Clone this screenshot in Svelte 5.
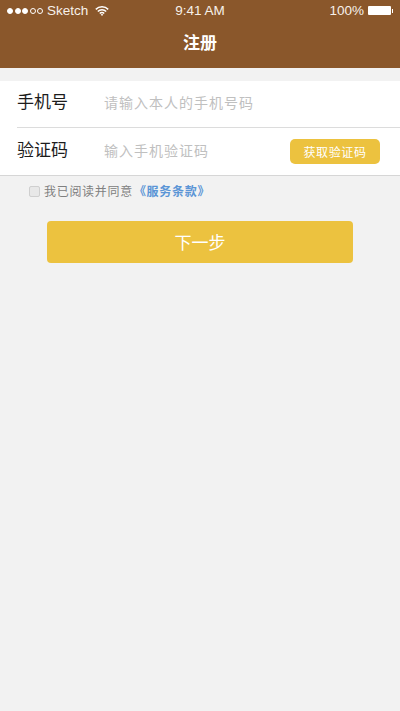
<script>
  let phone = '';
  let code = '';
  let agreed = false;
</script>

<div class="page">
  <header>
    <div class="status">
      <div class="status-left">
        <span class="signal">
          <i class="on"></i><i class="on"></i><i class="on"></i><i></i><i></i>
        </span>
        <span class="carrier">Sketch</span>
        <svg class="wifi" width="14" height="10" viewBox="0 0 14 10">
          <path d="M.8 3.4a8.8 8.8 0 0 1 12.4 0M2.8 5.5a6 6 0 0 1 8.4 0M4.8 7.5a3 3 0 0 1 4.4 0" fill="none" stroke="#fff" stroke-width="1.5" />
          <path d="M7 10 5.7 8.6a1.9 1.9 0 0 1 2.6 0z" fill="#fff" />
        </svg>
      </div>
      <span class="time">9:41 AM</span>
      <div class="status-right">
        <span>100%</span>
        <span class="battery"></span>
        <span class="battery-tip"></span>
      </div>
    </div>
    <h1>注册</h1>
  </header>

  <section class="form">
    <label class="row">
      <span class="name">手机号</span>
      <input type="tel" placeholder="请输入本人的手机号码" bind:value={phone} />
    </label>
    <label class="row">
      <span class="name">验证码</span>
      <input type="text" placeholder="输入手机验证码" bind:value={code} />
      <button class="get-code" type="button">获取验证码</button>
    </label>
  </section>

  <label class="agree">
    <input type="checkbox" bind:checked={agreed} />
    <span>我已阅读并同意</span>
    <a href="#terms">《服务条款》</a>
  </label>

  <button class="next" type="button">下一步</button>
</div>

<style>
  :global(body) {
    margin: 0;
    background: #f2f2f2;
    font-family: "Liberation Sans", "Noto Sans CJK SC", sans-serif;
  }

  .page {
    height: 711px;
    background: #f2f2f2;
    overflow: hidden;
  }

  header {
    height: 68px;
    background: #8a572b;
    color: #fff;
    box-sizing: border-box;
  }

  .status {
    height: 21px;
    padding: 0 7px;
    display: grid;
    grid-template-columns: 1fr auto 1fr;
    align-items: center;
    font-size: 13.5px;
    color: #f7f1ea;
  }

  .status-left {
    display: flex;
    align-items: center;
  }

  .signal {
    display: flex;
    gap: 1.5px;
    margin-right: 4px;
  }

  .signal i {
    border: 1px solid #fff;
    border-radius: 50%;
    box-sizing: border-box;
    width: 6px;
    height: 6px;
  }

  .signal i.on {
    background: #fff;
  }

  .wifi {
    margin-left: 7px;
  }

  .status-right {
    display: flex;
    align-items: center;
    justify-content: flex-end;
  }

  .battery {
    width: 23px;
    height: 9px;
    margin-left: 4px;
    background: #fff;
    border-radius: 1px;
  }

  .battery-tip {
    width: 1px;
    height: 4px;
    margin-left: 1px;
    background: #fff;
  }

  h1 {
    margin: 0;
    text-align: center;
    font-size: 17px;
    line-height: 45px;
    font-weight: 700;
  }

  .form {
    margin-top: 13px;
    padding-left: 17px;
    background: #fff;
    border-bottom: 1px solid #d6d6d6;
  }

  .row {
    height: 46px;
    display: flex;
    align-items: center;
    padding-right: 20px;
  }

  .row + .row {
    height: 47px;
    border-top: 1px solid #dcdcdc;
  }

  .name {
    width: 87px;
    margin-bottom: 2px;
    font-size: 17px;
    line-height: 20px;
    color: #1c1c1c;
    flex-shrink: 0;
  }

  input[type="tel"],
  input[type="text"] {
    flex: 1;
    min-width: 0;
    margin-bottom: 2px;
    border: 0;
    padding: 0;
    outline: 0;
    background: none;
    font: inherit;
    font-size: 14px;
    letter-spacing: 1px;
  }

  input::placeholder {
    color: #c0c0c0;
    opacity: 1;
  }

  .get-code {
    width: 90px;
    height: 25px;
    flex-shrink: 0;
    padding: 0;
    border: 0;
    border-radius: 5px;
    background: #ecc23f;
    color: #fff;
    font: inherit;
    font-size: 12px;
    letter-spacing: 0.6px;
  }

  .agree {
    height: 30px;
    padding-left: 29px;
    display: flex;
    align-items: center;
    font-size: 12px;
    letter-spacing: 0.7px;
    color: #808080;
  }

  .agree span,
  .agree a {
    margin-bottom: 1px;
  }

  .agree input {
    appearance: none;
    width: 11px;
    height: 11px;
    margin: 0 4px 0 0;
    background: #e8e8e8;
    border: 1px solid #cfcfcf;
    border-radius: 2px;
  }

  .agree a {
    margin-left: 1px;
    color: #5b95d6;
    font-weight: 700;
    text-decoration: none;
  }

  .next {
    display: block;
    width: 306px;
    height: 42px;
    margin: 15px auto 0;
    padding: 0 0 1px;
    border: 0;
    border-radius: 4px;
    background: #ecc23f;
    color: #fff;
    font: inherit;
    font-size: 17px;
  }
</style>
